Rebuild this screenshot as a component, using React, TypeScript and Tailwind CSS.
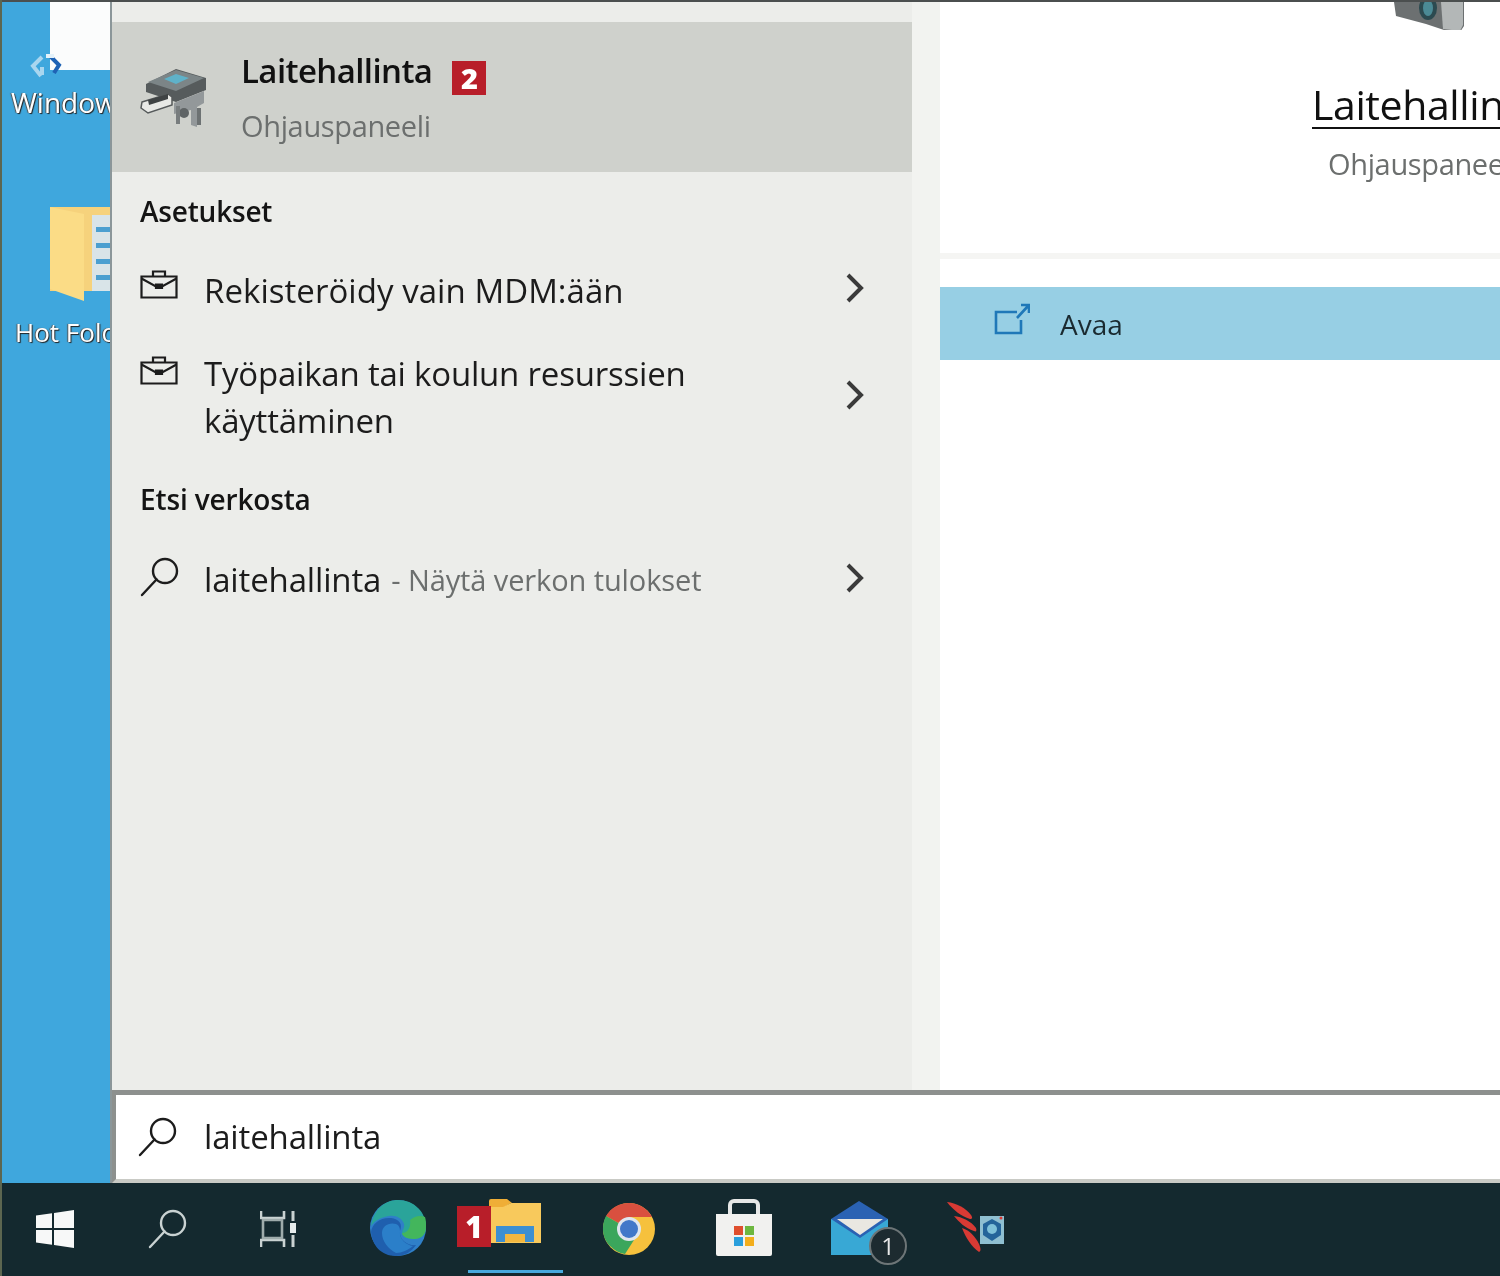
import React from "react";

const font = "font-['Open_Sans','Noto_Sans',sans-serif]";

function Briefcase() {
  return (
    <svg width="38" height="30" viewBox="0 0 38 30" fill="none" stroke="#1c1c1c" strokeWidth="2.2" className="shrink-0">
      <path d="M1.5 7.5h35v21h-35z" />
      <path d="M13 7V2.5h12V7" />
      <path d="M1.5 9.5 15 17h8l13.500-7.500" />
      <path d="M16 15.500h6v3.500h-6z" fill="#1c1c1c" />
    </svg>
  );
}

function Chevron() {
  return (
    <svg width="20" height="32" viewBox="0 0 20 32" fill="none" stroke="#3a3a3a" strokeWidth="4" className="shrink-0">
      <path d="M3 3l13 13L3 29" />
    </svg>
  );
}

function SearchGlass({ color = "#1c1c1c", size = 40 }: { color?: string; size?: number }) {
  return (
    <svg width={size} height={size} viewBox="0 0 40 40" fill="none" stroke={color} strokeWidth="2.400" className="shrink-0">
      <circle cx="25" cy="14" r="12" />
      <path d="M16.500 22.500 2 38" strokeLinecap="round" />
    </svg>
  );
}

function DeviceManager() {
  return (
    <svg width="70" height="62" viewBox="0 0 70 62" className="shrink-0">
      <path d="M6 18 36 3l30 9v12L36 36 6 26z" fill="#565b5c" />
      <path d="M8 16 36 4l28 8-28 13z" fill="#7c8587" />
      <path d="M24 13 36 8l13 4-13 6z" fill="#5fb2c9" />
      <path d="M2 36l26-8 4 3v8L8 47 1 42z" fill="#e8e9e6" stroke="#55595a" strokeWidth="1.500" />
      <path d="M8 34l20-6v5L9 39z" fill="#3f4344" />
      <path d="M34 37l30-12v12l-7 4v20l-6-2V44l-17 4z" fill="#93989a" />
      <circle cx="44" cy="47" r="5" fill="#5f6465" />
      <path d="M36 40h4v18h-4z" fill="#787d7e" />
      <path d="M57 42h4v17h-4z" fill="#6d7273" />
    </svg>
  );
}

function CameraTop() {
  return (
    <svg width="76" height="32" viewBox="0 0 76 32" className="shrink-0">
      <path d="M0 0h70v24l-4 6-16-2-18-6-30-8z" fill="#6c7071" />
      <path d="M47 0h22v23l-3 6-17-2z" fill="#b3b7b7" />
      <ellipse cx="34" cy="6" rx="9" ry="12" fill="#2c4a50" />
      <ellipse cx="34" cy="6" rx="5" ry="8" fill="#4b8a95" />
    </svg>
  );
}

function OpenIcon() {
  return (
    <svg width="36" height="32" viewBox="0 0 36 32" fill="none" stroke="#1f78b8" strokeWidth="2.600" className="shrink-0">
      <path d="M27 17v13H2V9h21" />
      <path d="M23 15 34 3M27 2h8v8" />
    </svg>
  );
}

function RecycleBin() {
  return (
    <svg width="36" height="28" viewBox="0 0 36 28" fill="none" strokeWidth="4">
      <path d="M12 4 3 13l8 10" stroke="#a9d6ef" />
      <path d="M12 14v8" stroke="#a9d6ef" />
      <path d="M20 3l9 9-5 8" stroke="#1f63b5" />
      <path d="M16 3h8" stroke="#e4f2fa" />
    </svg>
  );
}

function HotFolder() {
  return (
    <svg width="60" height="94" viewBox="0 0 60 94">
      <path d="M0 0h60v84H0z" fill="#f6d27c" />
      <path d="M0 0l34 7v87L0 82z" fill="#fbdc86" />
      <path d="M42 8h18v76H42z" fill="#d9e4e8" />
      <path d="M46 20h14v5H46zM46 36h14v5H46zM46 52h14v5H46zM46 68h14v5H46z" fill="#4b9fd0" />
    </svg>
  );
}

function WindowsLogo() {
  return (
    <svg width="38" height="38" viewBox="0 0 38 38" fill="#f7f8f8">
      <path d="M0 5.500 16 3.200V18H0z" />
      <path d="M18 3 38 0v18H18z" />
      <path d="M0 20h16v14.800L0 32.500z" />
      <path d="M18 20h20v18l-20-3z" />
    </svg>
  );
}

function TaskView() {
  return (
    <svg width="38" height="38" viewBox="0 0 38 38" fill="none" stroke="#c9d2d2" strokeWidth="2.600">
      <path d="M1 1v7h23V1M1 37v-7h23v7" />
      <path d="M3 10h19v18H3z" stroke="#9eabab" />
      <path d="M33 1v10M33 25v12" strokeWidth="3" />
      <rect x="30" y="13" width="6" height="10" fill="#e6ecec" stroke="none" />
    </svg>
  );
}

function Edge() {
  return (
    <svg width="58" height="58" viewBox="0 0 58 58">
      <circle cx="29" cy="29" r="28" fill="#2f7fc8" />
      <path d="M2 27C5 9 17 1 29 1c16 0 28 12 28 27 0 8-5 12-12 12-7 0-12-3-12-6 0-3 3-5 2-9-2-6-8-9-15-8C13 18 6 21 2 27z" fill="#2aa49a" />
      <path d="M57 28c0 8-5 12-12 12-7 0-12-3-12-6 7 0 9-8 8-13 5-4 10-5 15-3 1 3 1 6 1 10z" fill="#43b65c" />
      <path d="M2 33c1-9 10-15 20-14 8 1 12 6 9 13-1 10 9 15 16 14-5 7-11 11-20 11C12 57 3 46 2 33z" fill="#1f5fae" />
      <path d="M13 34c0-7 7-11 14-9 3 1 4 4 4 7-1 8 6 14 13 15-5 4-11 7-17 7-8-4-14-12-14-20z" fill="#2b7fc9" />
    </svg>
  );
}

function Explorer() {
  return (
    <div className="relative w-[84px] h-[48px]">
      <svg width="52" height="44" viewBox="0 0 52 44" className="absolute right-0 top-0">
        <path d="M0 2a2 2 0 0 1 2-2h16l5 4h-1L14 9H0z" fill="#efae37" />
        <path d="M0 8h14l8-4h30v40H0z" fill="#f8c95c" />
        <path d="M7 43V27h38v16h-9v-8H16v8z" fill="#3d8fd1" />
        <path d="M16 35h20v8H16z" fill="#f3b73f" />
      </svg>
      <div className={`${font} absolute left-0 top-[7px] w-[34px] h-[41px] bg-[#b81e29] flex items-center justify-center text-white font-extrabold text-[30px] leading-none`}>
        1
      </div>
    </div>
  );
}

function Chrome() {
  return (
    <svg width="54" height="54" viewBox="0 0 54 54">
      <circle cx="27" cy="27" r="26" fill="#f6c13d" />
      <path d="M27 27 4 14C9 6 17 1 27 1c10 0 19 6 23 14H27z" fill="#d9503f" />
      <path d="M27 27 4 14C-1 24 0 36 8 44c4 4 9 7 15 8l9-14z" fill="#3ba65c" />
      <circle cx="27" cy="27" r="12" fill="#dfe6ee" />
      <circle cx="27" cy="27" r="9" fill="#4178c9" />
    </svg>
  );
}

function Store() {
  return (
    <svg width="56" height="58" viewBox="0 0 56 58">
      <path d="M14 16V6a4 4 0 0 1 4-4h20a4 4 0 0 1 4 4v10" fill="none" stroke="#e6e7e6" strokeWidth="4" />
      <path d="M0 15h56v40a2 2 0 0 1-2 2H2a2 2 0 0 1-2-2z" fill="#f1f1ef" />
      <path d="M18 27h9v9h-9z" fill="#df4f2e" />
      <path d="M29 27h9v9h-9z" fill="#6db73f" />
      <path d="M18 38h9v9h-9z" fill="#2a9fdc" />
      <path d="M29 38h9v9h-9z" fill="#f3ae1c" />
    </svg>
  );
}

function Mail() {
  return (
    <div className="relative w-[78px] h-[64px]">
      <svg width="58" height="56" viewBox="0 0 58 56" className="absolute left-0 top-0">
        <path d="M0 18 28 0l29 18v36H0z" fill="#2a62b3" />
        <path d="M6 18h46L29 34z" fill="#e9e7e1" />
        <path d="M0 18l29 19 28-19v36H0z" fill="#38a8d5" />
      </svg>
      <div className={`${font} absolute left-[38px] top-[26px] w-[38px] h-[38px] rounded-full bg-[#1d2b30] border-2 border-[#6d7577] flex items-center justify-center text-[#e8e8e8] text-[24px] leading-none`}>
        1
      </div>
    </div>
  );
}

function RedApp() {
  return (
    <svg width="58" height="52" viewBox="0 0 58 52">
      <path d="M33 14h24v28H33z" fill="#8fbfd1" />
      <path d="M45 17l9 5v11l-9 6-9-6V22z" fill="#24649a" />
      <circle cx="45" cy="27" r="5" fill="#7fc1d9" />
      <circle cx="54" cy="16" r="1.500" fill="#d83a34" />
      <path d="M0 0c9 1 19 6 24 13 2 3 1 4-1 4C14 14 6 8 0 0z" fill="#d83a34" />
      <path d="M7 14c8 1 17 5 22 12 1 3 0 4-2 3-9-3-15-9-20-15z" fill="#d83a34" />
      <path d="M15 26c7 2 13 8 17 16 2 5 2 7 0 8-8-6-13-14-17-24z" fill="#d83a34" />
    </svg>
  );
}

export default function App() {
  return (
    <div className={`${font} w-[1500px] h-[1276px] overflow-hidden flex flex-col bg-[#3fa7dd] border-l-2 border-l-[#5c6650] blur-[0.5px]`}>
      <div className="h-[1183px] flex shrink-0 border-t-2 border-t-[#4b4f4f]">
        {/* desktop strip */}
        <div className="w-[108px] shrink-0 overflow-hidden flex flex-col">
          <div className="ml-[48px] h-[68px] bg-[#fbfcfc] shrink-0" />
          <div className="ml-[28px] mt-[-17px] h-[28px]">
            <RecycleBin />
          </div>
          <div className="mt-[3px] pl-[9px] text-[28px] leading-[36px] font-medium text-white whitespace-nowrap [text-shadow:1px_1px_1px_#222,-1px_0_1px_#555]">
            Windows
          </div>
          <div className="mt-[87px] ml-[48px] h-[94px]">
            <HotFolder />
          </div>
          <div className="mt-[14px] pl-[13px] text-[26px] leading-[34px] font-medium text-white whitespace-nowrap [text-shadow:1px_1px_1px_#222,-1px_0_1px_#555]">
            Hot Folder
          </div>
        </div>

        {/* search flyout */}
        <div className="flex-1 min-w-0 flex flex-col border-l-2 border-l-[#8b9699]">
          <div className="h-[1088px] flex shrink-0">
            <div className="w-[800px] shrink-0 bg-[#ecedea] pt-[20px]">
              <div className="h-[150px] bg-[#cfd1cc] pl-[28px] flex items-center">
                <DeviceManager />
                <div className="ml-[31px] mt-[-1px]">
                  <div className="flex items-center h-[50px]">
                    <span className="text-[33px] font-semibold text-[#111] tracking-[-0.6px] mt-[1px]">Laitehallinta</span>
                    <span className="ml-[20px] mt-[14px] w-[34px] h-[34px] bg-[#b81e29] text-white text-[29px] font-extrabold leading-none flex items-center justify-center">
                      2
                    </span>
                  </div>
                  <div className="mt-[8px] text-[29px] leading-[44px] text-[#6c6f6e] tracking-[-0.35px]">Ohjauspaneeli</div>
                </div>
              </div>

              <div className="pl-[28px] mt-[19px] text-[28px] leading-[40px] font-semibold text-[#141414] tracking-[-0.2px]">Asetukset</div>

              <div className="flex items-center pl-[28px] pr-[47px] mt-[27px] h-[66px]">
                <div className="mt-[-14px]"><Briefcase /></div>
                <span className="ml-[26px] flex-1 text-[33px] text-[#1c1c1c] tracking-[0.05px] whitespace-nowrap">Rekisteröidy vain MDM:ään</span>
                <div className="mt-[-6px]"><Chevron /></div>
              </div>

              <div className="flex items-start pl-[28px] pr-[47px] mt-[26px] h-[96px]">
                <div className="mt-[5px]"><Briefcase /></div>
                <span className="ml-[26px] flex-1 text-[33px] leading-[47px] text-[#1c1c1c] tracking-[-0.2px]">
                  Työpaikan tai koulun resurssien
                  <br />
                  käyttäminen
                </span>
                <div className="mt-[29px]"><Chevron /></div>
              </div>

              <div className="pl-[28px] mt-[33px] text-[28px] leading-[40px] font-semibold text-[#141414] tracking-[-0.15px]">Etsi verkosta</div>

              <div className="flex items-center pl-[28px] pr-[47px] mt-[36px] h-[50px]">
                <div className="mt-[-6px]"><SearchGlass /></div>
                <span className="ml-[24px] text-[33px] text-[#1c1c1c] tracking-[-0.15px] whitespace-nowrap">laitehallinta</span>
                <span className="ml-[10px] flex-1 text-[29px] text-[#6c6f6e] tracking-[-0.1px] whitespace-nowrap">- Näytä verkon tulokset</span>
                <div className="mt-[-4px]"><Chevron /></div>
              </div>
            </div>

            <div className="w-[28px] shrink-0 bg-[#f2f3f0]" />

            <div className="flex-1 min-w-0 bg-white overflow-hidden">
              <div className="h-[28px] pl-[454px] overflow-hidden">
                <CameraTop />
              </div>
              <div className="mt-[51px] pl-[372px] whitespace-nowrap">
                <span className="inline-block text-[41px] leading-[46px] text-[#111] tracking-[-0.4px] border-b-2 border-b-[#111]">Laitehallinta</span>
              </div>
              <div className="mt-[15px] pl-[388px] text-[29px] leading-[40px] text-[#6c6f6e] tracking-[-0.35px] whitespace-nowrap">Ohjauspaneeli</div>
              <div className="mt-[69px] h-[6px] bg-[#f5f5f3]" />
              <div className="mt-[28px] h-[73px] bg-[#97cfe4] pl-[54px] flex items-center">
                <div className="mt-[-10px]"><OpenIcon /></div>
                <span className="ml-[30px] text-[28px] text-[#1a2a30]">Avaa</span>
              </div>
            </div>
          </div>

          {/* search box */}
          <div className="flex-1 bg-white border-t-[5px] border-t-[#8d908e] border-l-[4px] border-l-[#8d908e] border-b-[4px] border-b-[#c9cac5] pl-[22px] flex items-center">
            <SearchGlass />
            <span className="ml-[26px] text-[33px] text-[#1c1c1c] tracking-[-0.15px] whitespace-nowrap">laitehallinta</span>
          </div>
        </div>
      </div>

      {/* taskbar */}
      <div className="h-[93px] shrink-0 bg-[#14292f] flex items-center">
        <div className="ml-[34px] mt-[-2px]"><WindowsLogo /></div>
        <div className="ml-[74px] mt-[-2px]"><SearchGlass color="#c9d2d2" /></div>
        <div className="ml-[72px] mt-[-2px]"><TaskView /></div>
        <div className="ml-[71px] mt-[-4px]"><Edge /></div>
        <div className="ml-[38px] h-full flex flex-col items-center w-[100px] shrink-0">
          <div className="mt-[16px] h-[71px] mr-[32px]"><Explorer /></div>
          <div className="h-[3px] w-[95px] bg-[#47a9de]" />
        </div>
        <div className="ml-[37px] mt-[-2px]"><Chrome /></div>
        <div className="ml-[60px] mt-[-4px]"><Store /></div>
        <div className="ml-[59px] mt-[6px]"><Mail /></div>
        <div className="ml-[38px] mt-[-4px]"><RedApp /></div>
      </div>
    </div>
  );
}
